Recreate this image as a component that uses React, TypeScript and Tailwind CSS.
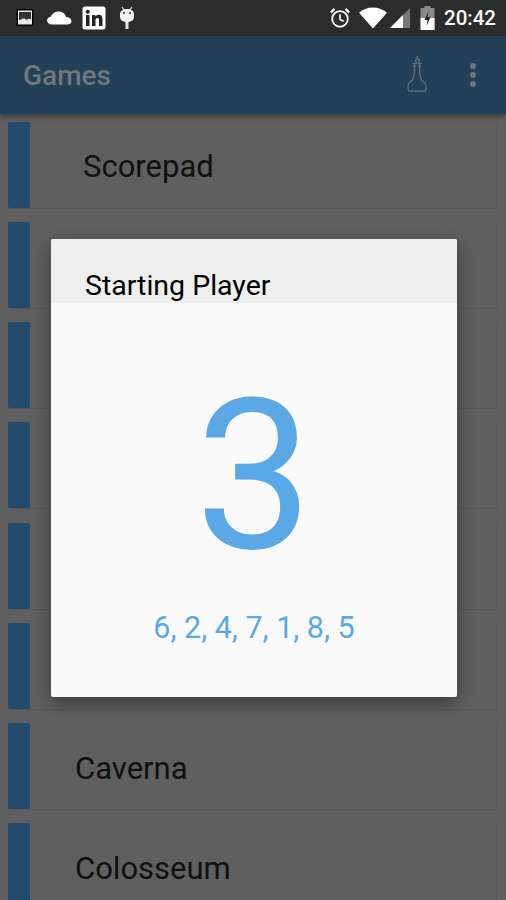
const rows = [
  { name: "Scorepad", indent: "pl-[53px] pt-1" },
  { name: "", indent: "" },
  { name: "", indent: "" },
  { name: "", indent: "" },
  { name: "", indent: "" },
  { name: "", indent: "" },
  { name: "Caverna", indent: "pl-[45px] pt-[6px]" },
  { name: "Colosseum", indent: "pl-[45px] pt-[6px]" },
];

const StatusBar = () => (
  <div className="h-9 bg-[#2c2c2c] flex items-center justify-between pl-4 pr-[10px]">
    <div className="flex items-center">
      <svg width="18" height="20" viewBox="0 0 18 20" className="mr-[13px]">
        <rect x="0.5" y="1" width="17" height="17" fill="#000" />
        <rect x="2" y="2.5" width="14" height="14" fill="#e8e8e8" />
        <path d="M3 4h12v7.500c-2-1.500-3-.5-4 .5-1.500-1.500-3.500-2-5-1-1 .5-2 1-3 1z" fill="#333" />
      </svg>
      <svg width="25" height="14" viewBox="0 0 25 14" className="mr-[10px]">
        <path d="M5 13.500C2 13.500 0 11.500 0 9.500s1.800-3.700 3.800-3.800C5 2.500 8 .5 11.500.5c3.800 0 6.800 2.300 7.600 5.500 3 .2 5.400 1.600 5.400 4.200 0 2-2 3.300-4.500 3.300z" fill="#fff" />
      </svg>
      <svg width="24" height="24" viewBox="0 0 24 24" className="mr-[13px]">
        <rect x="0.5" y="0.5" width="23" height="23" rx="2.500" fill="#fff" />
        <rect x="4" y="9" width="3.500" height="11" fill="#222" />
        <circle cx="5.700" cy="5.800" r="2" fill="#222" />
        <path d="M10 9h3.300v1.600c.7-1.100 1.900-1.900 3.500-1.900 2.800 0 3.700 1.800 3.700 4.700V20H17v-5.800c0-1.400-.4-2.300-1.600-2.300-1.300 0-1.900 1-1.900 2.300V20H10z" fill="#222" />
      </svg>
      <svg width="16" height="24" viewBox="0 0 16 24">
        <path d="M3 1l2 3M13 1l-2 3" stroke="#ddd" strokeWidth="1.200" />
        <path d="M1 8c0-3 3-5 7-5s7 2 7 5v3c0 3-3 5-7 5s-7-2-7-5z" fill="#f4f4f4" />
        <circle cx="5" cy="7" r="1" fill="#333" />
        <circle cx="11" cy="7" r="1" fill="#333" />
        <rect x="6.500" y="16" width="3" height="7" fill="#e8e8e8" />
      </svg>
    </div>
    <div className="flex items-center">
      <svg width="22" height="24" viewBox="0 0 24 24" className="mr-[8px]">
        <circle cx="12" cy="13" r="8.500" fill="none" stroke="#fff" strokeWidth="2" />
        <path d="M12 8v5.500l4 2" fill="none" stroke="#fff" strokeWidth="1.800" />
        <path d="M2 6l4-4M22 6l-4-4" stroke="#fff" strokeWidth="2.500" />
      </svg>
      <svg width="28" height="22" viewBox="0 0 29 22" className="mr-[3px]">
        <path d="M0 5.500C4 2 9 0 14.500 0S25 2 29 5.500L14.500 22z" fill="#fff" />
      </svg>
      <svg width="20" height="22" viewBox="0 0 20 22" className="mr-[10px]">
        <path d="M0 21L20 1v20z" fill="#777" />
        <path d="M0 21L13 8v13z" fill="#fff" />
      </svg>
      <svg width="15" height="24" viewBox="0 0 14 24" className="mr-[9px]">
        <rect x="4" y="0" width="6" height="3" fill="#888" />
        <rect x="0" y="2" width="14" height="22" rx="1" fill="#8a8a8a" />
        <rect x="0" y="12" width="14" height="12" rx="1" fill="#fff" />
        <path d="M8 5L4 14h3l-1 6 4-9H7z" fill="#222" />
      </svg>
      <span className="font-['Roboto',sans-serif] text-[20.5px] font-medium text-white leading-none">20:42</span>
    </div>
  </div>
);

const AppBar = () => (
  <div className="h-[78px] bg-[#234059] flex items-center justify-between pl-[23px] pr-[30px] shadow-[0_3px_5px_rgba(0,0,0,0.35)] relative">
    <span className="font-['Roboto',sans-serif] text-[28px] font-medium text-[#6f787d] pt-[2px]">Games</span>
    <div className="flex items-center gap-[42px]">
      <svg width="21" height="42" viewBox="0 0 22 42" fill="none" stroke="#67737b" strokeWidth="1.300">
        <path d="M11 1v3M9 6c0-1.500 1-2 2-2s2 .5 2 2-1 2.500-1 3h2l-1.500 3h1.500l-1 2c0 4 .5 8 2 12 2.500 2 5 4 5 7 0 2-.5 4-1 5H2c-.5-1-1-3-1-5 0-3 2.500-5 5-7 1.500-4 2-8 2-12l-1-2h1.500L7 9h3c0-.5-1-1.500-1-3z" />
      </svg>
      <div className="flex flex-col gap-[3px]">
        <div className="size-[6px] rounded-full bg-[#6d767c]" />
        <div className="size-[6px] rounded-full bg-[#6d767c]" />
        <div className="size-[6px] rounded-full bg-[#6d767c]" />
      </div>
    </div>
  </div>
);

const Row = ({ name, indent }: { name: string; indent: string }) => (
  <div className="h-[87px] mb-[13.15px] ml-2 mr-[9px] flex border-b border-r border-[#575757] rounded-[2px]">
    <div className="w-[22px] h-[86px] bg-[#224b6d] rounded-[2px] shrink-0" />
    <div className={`flex items-center h-[86px] text-[31px] text-[#101010] font-['Roboto',sans-serif] ${indent}`}>
      {name}
    </div>
  </div>
);

const App = () => {
  return (
    <div className="w-[506px] h-[900px] overflow-hidden relative bg-[#5f5f5f]">
      <StatusBar />
      <AppBar />
      <div className="pt-2">
        {rows.map((r, i) => (
          <Row key={i} name={r.name} indent={r.indent} />
        ))}
      </div>
      <div className="absolute inset-0 flex justify-center pt-[239px] pl-[2px] pointer-events-none">
        <div className="w-[406px] h-[458px] rounded-[2px] overflow-hidden bg-[#fafafa] shadow-[0_6px_18px_rgba(0,0,0,0.4)] flex flex-col font-['Roboto',sans-serif]">
          <div className="h-16 bg-[#eeeeee] pl-[34px] pt-[29px] text-[28.5px] leading-9 text-black shrink-0">
            Starting Player
          </div>
          <div className="flex-1 flex flex-col items-center text-[#5aa9e6]">
            <div className="text-[209px] leading-none mt-[69px] h-[210px]">3</div>
            <div className="text-[30.5px] leading-9 mt-[28px]">6, 2, 4, 7, 1, 8, 5</div>
          </div>
        </div>
      </div>
    </div>
  );
};

export default App;
